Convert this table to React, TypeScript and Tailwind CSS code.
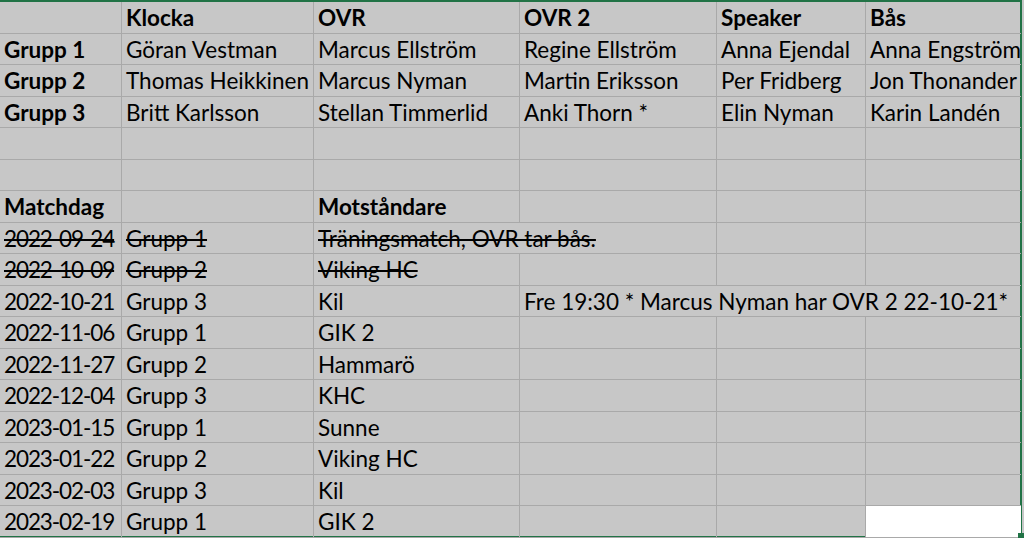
const COLS = "grid-cols-[122px_192px_206px_197px_149px_155px]";

type Cell = { text?: string; bold?: boolean; strike?: boolean; span?: number; active?: boolean; date?: boolean };

const d = (text: string, strike = false): Cell => ({ text, strike, date: true });

const ROWS: Cell[][] = [
  [{}, { text: "Klocka", bold: true }, { text: "OVR", bold: true }, { text: "OVR 2", bold: true }, { text: "Speaker", bold: true }, { text: "Bås", bold: true }],
  [{ text: "Grupp 1", bold: true }, { text: "Göran Vestman" }, { text: "Marcus Ellström" }, { text: "Regine Ellström" }, { text: "Anna Ejendal" }, { text: "Anna Engström" }],
  [{ text: "Grupp 2", bold: true }, { text: "Thomas Heikkinen" }, { text: "Marcus Nyman" }, { text: "Martin Eriksson" }, { text: "Per Fridberg" }, { text: "Jon Thonander" }],
  [{ text: "Grupp 3", bold: true }, { text: "Britt Karlsson" }, { text: "Stellan Timmerlid" }, { text: "Anki Thorn *" }, { text: "Elin Nyman" }, { text: "Karin Landén" }],
  [{}, {}, {}, {}, {}, {}],
  [{}, {}, {}, {}, {}, {}],
  [{ text: "Matchdag", bold: true }, {}, { text: "Motståndare", bold: true }, {}, {}, {}],
  [d("2022-09-24", true), { text: "Grupp 1", strike: true }, { text: "Träningsmatch, OVR tar bås.", strike: true, span: 2 }, {}, {}],
  [d("2022-10-09", true), { text: "Grupp 2 ", strike: true }, { text: "Viking HC", strike: true }, {}, {}, {}],
  [d("2022-10-21"), { text: "Grupp 3" }, { text: "Kil" }, { text: "Fre 19:30 * Marcus Nyman har OVR 2 22-10-21*", span: 3 }],
  [d("2022-11-06"), { text: "Grupp 1" }, { text: "GIK 2" }, {}, {}, {}],
  [d("2022-11-27"), { text: "Grupp 2" }, { text: "Hammarö" }, {}, {}, {}],
  [d("2022-12-04"), { text: "Grupp 3" }, { text: "KHC" }, {}, {}, {}],
  [d("2023-01-15"), { text: "Grupp 1" }, { text: "Sunne" }, {}, {}, {}],
  [d("2023-01-22"), { text: "Grupp 2" }, { text: "Viking HC" }, {}, {}, {}],
  [d("2023-02-03"), { text: "Grupp 3" }, { text: "Kil" }, {}, {}, {}],
  [d("2023-02-19"), { text: "Grupp 1" }, { text: "GIK 2" }, {}, {}, { active: true }],
];

function SheetCell({ cell, last }: { cell: Cell; last: boolean }) {
  const span = cell.span === 3 ? "col-span-3" : cell.span === 2 ? "col-span-2" : "";
  return (
    <div
      className={`${span} h-[31.5px] pl-[4px] pt-[2px] flex items-center whitespace-nowrap overflow-hidden border-b border-[#a9a9a9] ${
        last ? "" : "border-r"
      } ${cell.active ? "bg-white" : ""} ${cell.bold ? "font-bold" : ""} ${cell.strike ? "line-through" : ""} ${
        cell.date ? "tracking-[-1.1px]" : ""
      }`}
    >
      {cell.text}
    </div>
  );
}

export default function App() {
  return (
    <div
      className="w-[1024px] h-[538px] bg-[#c7c7c7] text-black text-[22.5px] leading-none overflow-hidden"
      style={{ fontFamily: "Lato, 'Noto Sans', sans-serif" }}
    >
      <div className="relative w-[1022px] h-[538px] border-t-2 border-r-2 border-b-2 border-[#217346]">
        <div className={`grid ${COLS}`}>
          {ROWS.map((row, r) =>
            row.map((cell, c) => (
              <SheetCell key={`${r}-${c}`} cell={cell} last={c === row.length - 1} />
            ))
          )}
        </div>
        {/* fill handle */}
        <div className="absolute right-[-4px] bottom-[-3px] w-[6px] h-[6px] bg-[#217346]" />
      </div>
    </div>
  );
}
